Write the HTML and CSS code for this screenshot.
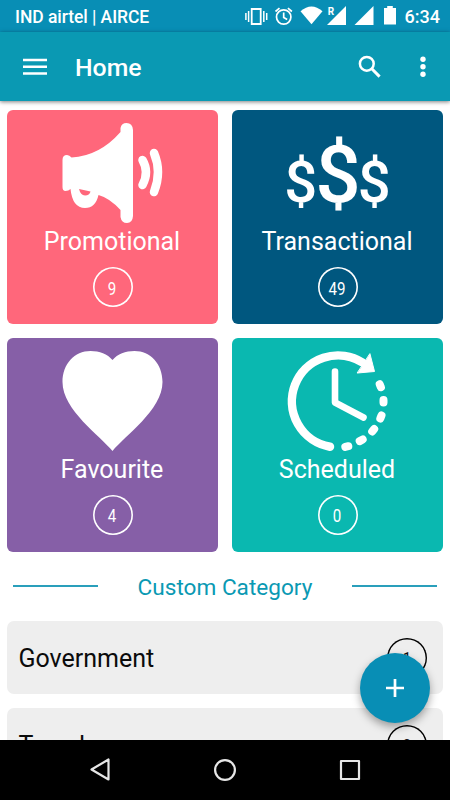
FILE: index.html
```html
<!DOCTYPE html>
<html lang="en">
<head>
<meta charset="utf-8">
<title>Home</title>
<link rel="stylesheet" href="styles.css">
</head>
<body>
<div class="screen">
  <div class="status">
    <span class="carrier">IND airtel | AIRCE</span>
    <svg class="status-icons" width="156" height="32" viewBox="244 0 156 32" fill="#fff">
      <path d="M251.700 9h9v15h-9z" fill="none" stroke="#fff" stroke-width="1.800"/>
      <path d="M245.900 13v7M248.600 11v11M263.800 11v11M266.700 13v7" stroke="#fff" stroke-width="1.500" fill="none"/>
      <g fill="none" stroke="#fff" stroke-width="1.700"><circle cx="283.700" cy="17" r="7.200"/><path d="M283.700 12.500v5l3.500 2M275.500 11.500l4-3.400M291.900 11.500l-4-3.400"/></g>
      <path d="M300.500 11.300Q311.500 1.500 322.500 11.300L311.500 24.300z"/>
      <path d="M346 6v18.900h-19zM373.500 6v18.900h-19z"/>
      <path d="M384 8h3.200V6h5.600v2h3.200v16.500h-12z"/>
      <text class="roaming" x="327.700" y="15">R</text>
    </svg>
    <span class="time">6:34</span>
  </div>
  <header class="bar">
    <svg class="menu" width="24" height="18" viewBox="0 0 24 18"><path d="M0 2h24M0 8.800h24M0 15.600h24" stroke="#fff" stroke-width="2.500"/></svg>
    <h1>Home</h1>
    <svg class="search" width="24" height="24" viewBox="0 0 24 24" fill="none" stroke="#fff"><circle cx="8.800" cy="8.800" r="6.900" stroke-width="2.500"/><path d="M13.800 13.800l7.800 7.800" stroke-width="3"/></svg>
    <svg class="more" width="6" height="22" viewBox="0 0 6 22" fill="#fff"><circle cx="3" cy="3.200" r="2.700"/><circle cx="3" cy="10.800" r="2.700"/><circle cx="3" cy="18.300" r="2.700"/></svg>
  </header>
  <main>
    <section class="grid">
      <article class="card promo">
        <svg width="103" height="102" viewBox="-0.500 0 103 102" fill="#fff">
          <path d="M1 38Q1 33 5.500 33Q8 33 10 35.500Q38 34 59 10V6Q60 1 65 1Q71 1 71.500 8V94Q71 101 65.500 101Q60 101 59 95V88Q48 76 37 73Q34 86 23.500 86Q11 86 9 67Q7 69 4 69Q1 69 1 65z"/>
          <path class="cut" d="M17.500 67L29 69.500Q28 73.500 23.500 73.500Q19 73 17.500 67z"/>
          <path d="M81 38Q88 50 81 63M92.500 31Q100.500 50 92.500 70" fill="none" stroke="#fff" stroke-width="8.500" stroke-linecap="round"/>
        </svg>
        <h2>Promotional</h2>
        <div class="count"><span>9</span></div>
      </article>
      <article class="card trans">
        <svg width="103" height="102" viewBox="-0.500 0 103 102" fill="#fff">
          <text class="dollar small" x="14.300" y="79.500" text-anchor="middle">$</text>
          <text class="dollar" x="51.500" y="80" text-anchor="middle">$</text>
          <text class="dollar small" x="87.800" y="79.500" text-anchor="middle">$</text>
        </svg>
        <h2>Transactional</h2>
        <div class="count"><span>49</span></div>
      </article>
      <article class="card fav">
        <svg width="103" height="102" viewBox="-0.500 0 103 102" fill="#fff">
          <path d="M51 101C39 86 1 60 1 32C1 14 13 1 29 1C38 1 46 4 51 10C56 4 64 1 73 1C89 1 101 14 101 32C101 60 63 86 51 101z"/>
        </svg>
        <h2>Favourite</h2>
        <div class="count"><span>4</span></div>
      </article>
      <article class="card sched">
        <svg width="103" height="102" viewBox="-0.500 0 103 102" fill="none" stroke="#fff" stroke-linecap="round">
          <path d="M43.500 96.700A46 46 0 1 1 76 12.500" stroke-width="8.500"/>
          <path d="M83.500 4L88 21.500L71 23z" fill="#fff" stroke-width="1"/>
          <path d="M48.500 21.500V52.500L77 67.500" stroke-width="6.600" stroke-linejoin="round"/>
          <path d="M93.200 34.200l1.200 3M97 50v2.500M95 65.500l-1.200 3M87.700 79l-2 2.500M76.200 89.500l-3 1.600M61.800 96.200l-3 .7" stroke-width="8"/>
        </svg>
        <h2>Scheduled</h2>
        <div class="count"><span>0</span></div>
      </article>
    </section>
    <div class="divider"><i></i><h3>Custom Category</h3><i></i></div>
    <div class="row"><span class="label">Government</span><div class="count dark"><span>1</span></div></div>
    <div class="row"><span class="label">Travel</span><div class="count dark"><span>2</span></div></div>
    <button class="fab" aria-label="Add"><svg width="18" height="18" viewBox="0 0 18 18"><path d="M9 0v18M0 9h18" stroke="#fff" stroke-width="2.700"/></svg></button>
  </main>
  <nav>
    <svg width="24" height="24" viewBox="0 0 24 24"><path d="M20.500 1.500v20L3.500 11.500z"/></svg>
    <svg width="24" height="24" viewBox="0 0 24 24"><circle cx="12" cy="12" r="9.900"/></svg>
    <svg width="24" height="24" viewBox="0 0 24 24"><path d="M3 3h18v18H3z"/></svg>
  </nav>
</div>
</body>
</html>
```
FILE: styles.css
```css
* { box-sizing: border-box; }
body { margin: 0; font-family: Roboto, "Liberation Sans", sans-serif; background: #fff; }
h1, h2, h3 { margin: 0; }
svg { display: block; flex: none; overflow: visible; }
.screen { width: 450px; height: 800px; display: flex; flex-direction: column; overflow: hidden; }
.status { height: 32px; flex: none; display: flex; align-items: center; background: #088eb5; color: #fff; padding: 0 10px 0 15px; font-weight: 500; }
.carrier { font-size: 17.500px; letter-spacing: -.06px; width: 229px; white-space: nowrap; padding-top: 1px; }
.roaming { font-size: 10px; font-weight: 700; }
.time { font-size: 18px; margin-left: 5px; }
.bar { height: 69px; flex: none; display: flex; align-items: center; background: #0a99b3; color: #fff; padding: 0 24px 0 23px; box-shadow: 0 1px 4px rgba(0,0,0,.5); position: relative; z-index: 1; }
.bar h1 { font-size: 24.800px; line-height: 30px; font-weight: 500; margin: 2px auto 0 28px; }
.search { margin-right: 38px; }
main { height: 639px; flex: none; overflow: hidden; position: relative; padding: 9px 7px 0; }
.grid { display: grid; grid-template-columns: 211px 211px; gap: 13.500px 14px; }
.card { height: 214px; border-radius: 6px; display: flex; flex-direction: column; align-items: center; color: #fff; padding-top: 12px; }
.promo { background: #ff677b; }
.trans { background: #00577f; }
.fav { background: #865fa7; }
.sched { background: #0ab8b0; }
.cut { fill: #ff677b; }
.dollar { font-size: 80px; font-weight: 500; }
.dollar.small { font-size: 58px; }
.card h2 { font-size: 25px; line-height: 30px; font-weight: 400; margin-top: 3px; margin-right: 1px; }
.count { width: 40px; height: 40px; flex: none; border-radius: 50%; box-shadow: inset 0 0 0 1.600px #fff; display: flex; align-items: center; justify-content: center; font-size: 18px; margin: 10px 0 0; }
.count span { transform: scaleX(.84); position: relative; top: 1px; }
.divider { height: 69.500px; display: flex; align-items: center; justify-content: space-between; padding: 0 6px; color: #0a99b3; }
.divider i { width: 85px; height: 2px; margin-bottom: 1px; background: #2a9fbb; }
.divider h3 { font-size: 22.600px; font-weight: 400; margin-top: 3px; }
.row { height: 73px; margin-bottom: 14px; border-radius: 7px; background: #eee; display: flex; align-items: center; justify-content: space-between; padding: 0 16px 0 11.500px; font-size: 25px; color: #0b0b0b; }
.label { margin-top: 1px; }
.count.dark { box-shadow: inset 0 0 0 1.400px #000; margin: 0; }
.fab { position: absolute; right: 20px; bottom: 17px; width: 70px; height: 70px; padding: 0; border: 0; border-radius: 50%; background: #088eb5; display: flex; align-items: center; justify-content: center; box-shadow: 0 4px 8px rgba(0,0,0,.35); }
nav { height: 60px; flex: none; background: #000; display: flex; justify-content: center; align-items: center; gap: 101px; }
nav svg { fill: none; stroke: #e6e6e6; stroke-width: 2.200; stroke-linejoin: round; }
```
